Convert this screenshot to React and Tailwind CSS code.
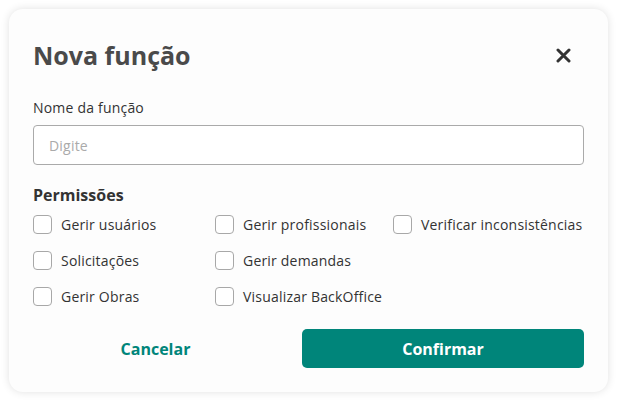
import React from "react";

const perms = [
  ["Gerir usuários", "Gerir profissionais", "Verificar inconsistências"],
  ["Solicitações", "Gerir demandas", null],
  ["Gerir Obras", "Visualizar BackOffice", null],
];

function Check({ label }) {
  return (
    <label className="flex items-center gap-[9px] text-[14px] tracking-[0.2px] text-[#333]">
      <span className="w-[19px] h-[19px] rounded-[4px] border border-[#a8a8a8] bg-white shrink-0" />
      <span>{label}</span>
    </label>
  );
}

export default function App() {
  return (
    <div className="w-[617px] h-[402px] bg-white p-[9px] font-['Open_Sans',sans-serif]">
      <div className="w-[599px] h-[383px] bg-[#fdfdfd] rounded-[14px] shadow-[0_0_8px_rgba(0,0,0,0.12)] px-[24px] pt-[30px]">
        {/* Header */}
        <div className="flex items-center justify-between h-[32px]">
          <h1 className="text-[25px] font-bold text-[#4a4a4a] leading-none">Nova função</h1>
          <svg width="15" height="15" viewBox="0 0 15 15" className="mr-[13px]">
            <path d="M2 2L13 13M13 2L2 13" stroke="#333" strokeWidth="3" strokeLinecap="round" />
          </svg>
        </div>

        {/* Nome */}
        <div className="mt-[28px] text-[14px] tracking-[0.2px] text-[#333] leading-[18px]">Nome da função</div>
        <div className="mt-[8px] w-[551px] h-[40px] border border-[#aaa] rounded-[4px] bg-white flex items-center px-[15px]">
          <span className="text-[14px] tracking-[0.2px] text-[#aaa]">Digite</span>
        </div>

        {/* Permissões */}
        <div className="mt-[20px] text-[16px] font-bold text-[#333] leading-[20px]">Permissões</div>
        <div className="mt-[9px] flex flex-col gap-[17px]">
          {perms.map((row, i) => (
            <div key={i} className="grid grid-cols-[182px_178px_1fr] h-[19px]">
              {row.map((p, j) => (p ? <Check key={j} label={p} /> : <div key={j} />))}
            </div>
          ))}
        </div>

        {/* Buttons */}
        <div className="mt-[24px] flex items-center gap-[24px]">
          <button className="w-[245px] h-[39px] text-[16px] font-bold text-[#00857a]">Cancelar</button>
          <button className="flex-1 h-[39px] rounded-[5px] bg-[#00857a] text-white text-[16px] font-bold">Confirmar</button>
        </div>
      </div>
    </div>
  );
}
